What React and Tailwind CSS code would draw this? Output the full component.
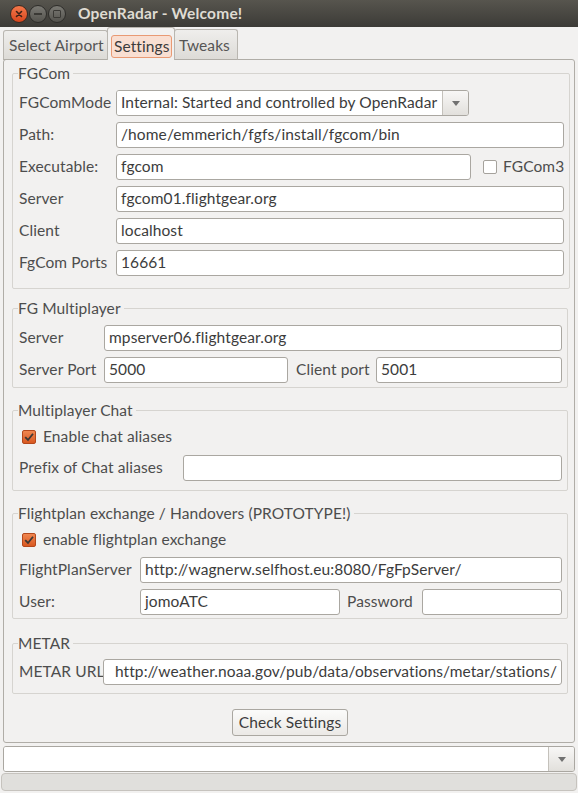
import { useState } from "react";

const font = { fontFamily: "Lato, 'Noto Sans', 'DejaVu Sans', sans-serif" };

function WinButton({ kind }) {
  if (kind === "close") {
    return (
      <div className="w-[18px] h-[18px] rounded-full bg-gradient-to-b from-[#f4784a] to-[#d8451c] border border-[#3a2a22] flex items-center justify-center">
        <svg width="8" height="8" viewBox="0 0 8 8">
          <path d="M1.5 1.5 L6.5 6.5 M6.5 1.5 L1.5 6.5" stroke="#3b2117" strokeWidth="1.6" strokeLinecap="round" />
        </svg>
      </div>
    );
  }
  return (
    <div className="w-[18px] h-[18px] rounded-full bg-gradient-to-b from-[#7b7a74] to-[#54534e] border border-[#2e2d2a] flex items-center justify-center">
      {kind === "min" ? (
        <div className="w-[8px] h-[2px] bg-[#3a3935]" />
      ) : (
        <div className="w-[8px] h-[8px] border-[1.5px] border-[#3a3935] rounded-[1px]" />
      )}
    </div>
  );
}

function TitleBar() {
  return (
    <div className="h-[27px] bg-gradient-to-b from-[#57554e] to-[#3c3b37] flex items-center pl-[10px] shrink-0">
      <div className="flex items-center gap-[1px]">
        <WinButton kind="close" />
        <WinButton kind="min" />
        <WinButton kind="max" />
      </div>
      <span className="ml-[12px] text-[15.5px] tracking-[0.2px] font-bold text-[#dfdbd2]">OpenRadar - Welcome!</span>
    </div>
  );
}

function Tabs() {
  return (
    <div className="flex items-end h-[33px] pl-[3px] relative z-10 -mb-[1px] shrink-0">
      <div className="h-[30px] w-[105px] border border-[#b9b6b0] border-b-[#b0ada7] rounded-t-[3px] bg-gradient-to-b from-[#efeeec] to-[#dddbd7] flex items-center pl-[5px] pt-[2px] text-[15.5px] tracking-[0.1px] text-[#555]">
        Select Airport
      </div>
      <div className="h-[33px] w-[68px] -ml-[1px] border border-[#b9b6b0] border-b-0 rounded-t-[3px] bg-[#f2f1f0] flex items-start pt-[7px] pl-[3px]">
        <div className="h-[23px] w-[61px] rounded-[3px] border border-[#e99a74] bg-[#f9dfd2] flex items-center pl-[2px] text-[15.5px] tracking-[0.1px] text-[#3c3c3c]">
          Settings
        </div>
      </div>
      <div className="h-[31px] w-[64px] -ml-[1px] border border-[#b9b6b0] border-b-[#b0ada7] rounded-t-[3px] bg-gradient-to-b from-[#efeeec] to-[#dddbd7] flex items-center pl-[4px] pt-[2px] text-[15.5px] tracking-[0.1px] text-[#555]">
        Tweaks
      </div>
    </div>
  );
}

function Field({ value = "", className = "", alignEnd = false }) {
  return (
    <div
      className={
        "h-[26px] bg-white border border-[#aaa7a1] rounded-[3px] flex items-center overflow-hidden whitespace-nowrap text-[15.5px] tracking-[0.1px] text-[#3c3c3c] " +
        (alignEnd ? "justify-end pr-[4px] " : "pl-[4px] ") +
        className
      }
    >
      {value}
    </div>
  );
}

function Combo({ value, className = "" }) {
  return (
    <div className={"h-[26px] flex border border-[#aaa7a1] rounded-[3px] overflow-hidden " + className}>
      <div className="flex-1 bg-white flex items-center pl-[4px] text-[15.5px] tracking-[0.1px] text-[#3c3c3c] whitespace-nowrap overflow-hidden">
        {value}
      </div>
      <div className="w-[26px] border-l border-[#c4c1bb] bg-gradient-to-b from-[#f8f7f6] to-[#e2e0dc] flex items-center justify-center">
        <svg width="8" height="5" viewBox="0 0 8 5">
          <path d="M0 0 H8 L4 5 Z" fill="#717171" />
        </svg>
      </div>
    </div>
  );
}

function Check({ checked, onChange }) {
  return (
    <button
      type="button"
      onClick={onChange}
      className={
        "w-[14px] h-[14px] rounded-[2px] border flex items-center justify-center shrink-0 " +
        (checked
          ? "bg-gradient-to-b from-[#f0864f] to-[#d9581f] border-[#b4481c]"
          : "bg-white border-[#a5a29c]")
      }
    >
      {checked && (
        <svg width="12" height="12" viewBox="0 0 12 12">
          <path d="M2.2 6.2 L5 9 L10 2.8" fill="none" stroke="#3d3835" strokeWidth="1.8" />
        </svg>
      )}
    </button>
  );
}

function Label({ children, className = "" }) {
  return (
    <span className={"text-[15.5px] tracking-[0.1px] text-[#4d4d4d] whitespace-nowrap " + className}>{children}</span>
  );
}

function Group({ title, className = "", children }) {
  return (
    <fieldset className={"border border-[#d6d4d0] rounded-[2px] pl-[6px] pr-[5px] " + className}>
      <legend className="-ml-[1px] pr-[3px] text-[15.5px] tracking-[0.1px] leading-[16px] text-[#4d4d4d]">{title}</legend>
      {children}
    </fieldset>
  );
}

function Row({ children, className = "" }) {
  return <div className={"flex items-center h-[26px] " + className}>{children}</div>;
}

export default function App() {
  const [fgcom3, setFgcom3] = useState(false);
  const [chatAliases, setChatAliases] = useState(true);
  const [flightplan, setFlightplan] = useState(true);

  return (
    <div className="w-[578px] h-[793px] overflow-hidden bg-[#f2f1f0] flex flex-col" style={font}>
      <TitleBar />
      <Tabs />

      <div className="ml-[3px] w-[572px] h-[684px] shrink-0 border border-[#b0ada7] rounded-[3px] pl-[8px] pr-[6px] pt-[5px] flex flex-col">
        <Group title="FGCom" className="pt-[9px] pb-[12px]">
          <div className="flex flex-col gap-[6px]">
            <Row>
              <Label className="w-[97px]">FGComMode</Label>
              <Combo value="Internal: Started and controlled by OpenRadar" className="w-[353px]" />
            </Row>
            <Row>
              <Label className="w-[97px]">Path:</Label>
              <Field value="/home/emmerich/fgfs/install/fgcom/bin" className="flex-1" />
            </Row>
            <Row>
              <Label className="w-[97px]">Executable:</Label>
              <Field value="fgcom" className="w-[355px]" />
              <div className="ml-[12px] flex items-center gap-[6px]">
                <Check checked={fgcom3} onChange={() => setFgcom3(!fgcom3)} />
                <Label>FGCom3</Label>
              </div>
            </Row>
            <Row>
              <Label className="w-[97px]">Server</Label>
              <Field value="fgcom01.flightgear.org" className="flex-1" />
            </Row>
            <Row>
              <Label className="w-[97px]">Client</Label>
              <Field value="localhost" className="flex-1" />
            </Row>
            <Row>
              <Label className="w-[97px]">FgCom Ports</Label>
              <Field value="16661" className="flex-1" />
            </Row>
          </div>
        </Group>

        <Group title="FG Multiplayer" className="mt-[11px] pt-[9px] pb-[4px]">
          <div className="flex flex-col gap-[6px]">
            <Row>
              <Label className="w-[85px]">Server</Label>
              <Field value="mpserver06.flightgear.org" className="flex-1" />
            </Row>
            <Row>
              <Label className="w-[85px]">Server Port</Label>
              <Field value="5000" className="w-[184px]" />
              <Label className="ml-[8px] w-[80px]">Client port</Label>
              <Field value="5001" className="flex-1" />
            </Row>
          </div>
        </Group>

        <Group title="Multiplayer Chat" className="mt-[14px] pt-[6px] pb-[9px]">
          <div className="flex flex-col gap-[5px]">
            <div className="flex items-center h-[26px] pl-[3px] gap-[7px]">
              <Check checked={chatAliases} onChange={() => setChatAliases(!chatAliases)} />
              <Label>Enable chat aliases</Label>
            </div>
            <Row>
              <Label className="w-[164px]">Prefix of Chat aliases</Label>
              <Field className="flex-1" />
            </Row>
          </div>
        </Group>

        <Group title="Flightplan exchange / Handovers (PROTOTYPE!)" className="mt-[14px] pt-[8px] pb-[3px]">
          <div className="flex flex-col gap-[6px]">
            <div className="flex items-center h-[22px] pl-[3px] gap-[7px]">
              <Check checked={flightplan} onChange={() => setFlightplan(!flightplan)} />
              <Label>enable flightplan exchange</Label>
            </div>
            <Row>
              <Label className="w-[121px]">FlightPlanServer</Label>
              <Field value="http://wagnerw.selfhost.eu:8080/FgFpServer/" className="flex-1" />
            </Row>
            <Row>
              <Label className="w-[121px]">User:</Label>
              <Field value="jomoATC" className="w-[200px]" />
              <Label className="ml-[7px] w-[75px]">Password</Label>
              <Field className="flex-1" />
            </Row>
          </div>
        </Group>

        <Group title="METAR" className="mt-[16px] pt-[8px] pb-[8px]">
          <Row>
            <Label className="w-[84px]">METAR URL</Label>
            <Field
              value="http://weather.noaa.gov/pub/data/observations/metar/stations/"
              alignEnd
              className="flex-1"
            />
          </Row>
        </Group>

        <div className="flex justify-center mt-[15px]">
          <button
            type="button"
            className="h-[27px] px-[6px] border border-[#aaa7a1] rounded-[3px] bg-gradient-to-b from-[#fbfbfa] to-[#ebe9e6] text-[15.5px] tracking-[0.1px] text-[#3c3c3c]"
          >
            Check Settings
          </button>
        </div>
      </div>

      <Combo value="" className="mt-[3px] ml-[3px] w-[572px] shrink-0" />

      <div className="mt-[1px] ml-[1px] w-[576px] h-[18px] shrink-0 rounded-[4px] border border-[#c6c3be] bg-[#e0dfdc]" />
    </div>
  );
}
